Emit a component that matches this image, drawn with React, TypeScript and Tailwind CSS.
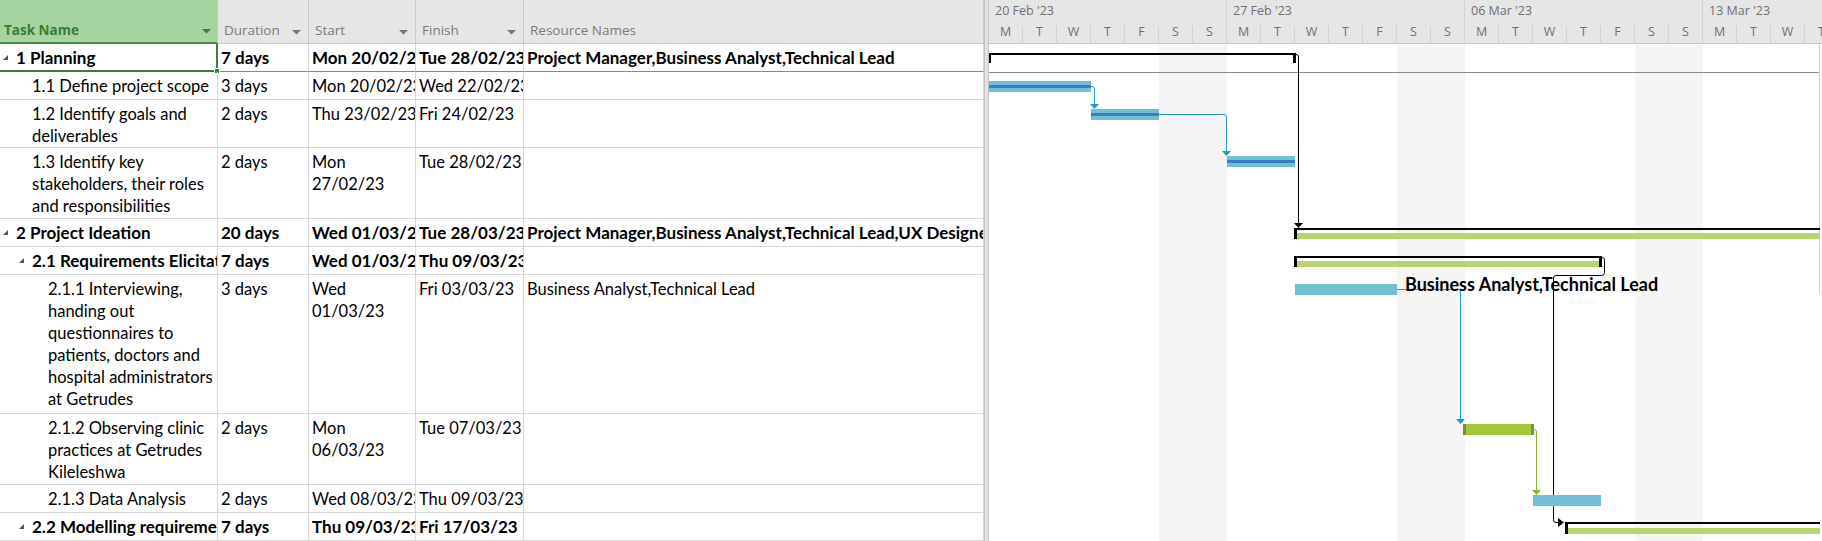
type Row = {
  h: string
  pad: string
  summary?: boolean
  first?: boolean
  name: string[]
  dur: string[]
  start: string[]
  finish: string[]
  res?: string[]
}

const rows: Row[] = [
  {
    h: 'h-[28px]',
    pad: 'pl-[3px]',
    summary: true,
    first: true,
    name: ['1 Planning'],
    dur: ['7 days'],
    start: ['Mon 20/02/23'],
    finish: ['Tue 28/02/23'],
    res: ['Project Manager,Business Analyst,Technical Lead'],
  },
  { h: 'h-[28px]', pad: 'pl-[32px]', name: ['1.1 Define project scope'], dur: ['3 days'], start: ['Mon 20/02/23'], finish: ['Wed 22/02/23'] },
  { h: 'h-[48px]', pad: 'pl-[32px]', name: ['1.2 Identify goals and', 'deliverables'], dur: ['2 days'], start: ['Thu 23/02/23'], finish: ['Fri 24/02/23'] },
  {
    h: 'h-[71px]',
    pad: 'pl-[32px]',
    name: ['1.3 Identify key', 'stakeholders, their roles', 'and responsibilities'],
    dur: ['2 days'],
    start: ['Mon', '27/02/23'],
    finish: ['Tue 28/02/23'],
  },
  {
    h: 'h-[29px]',
    pad: 'pl-[3px]',
    summary: true,
    name: ['2 Project Ideation'],
    dur: ['20 days'],
    start: ['Wed 01/03/23'],
    finish: ['Tue 28/03/23'],
    res: ['Project Manager,Business Analyst,Technical Lead,UX Designer'],
  },
  {
    h: 'h-[28px]',
    pad: 'pl-[19px]',
    summary: true,
    name: ['2.1 Requirements Elicitation'],
    dur: ['7 days'],
    start: ['Wed 01/03/23'],
    finish: ['Thu 09/03/23'],
  },
  {
    h: 'h-[139px]',
    pad: 'pl-[48px]',
    name: [
      '2.1.1 Interviewing,',
      'handing out',
      'questionnaires to',
      'patients, doctors and',
      'hospital administrators',
      'at Getrudes',
      'clinic',
    ],
    dur: ['3 days'],
    start: ['Wed', '01/03/23'],
    finish: ['Fri 03/03/23'],
    res: ['Business Analyst,Technical Lead'],
  },
  {
    h: 'h-[71px]',
    pad: 'pl-[48px]',
    name: ['2.1.2 Observing clinic', 'practices at Getrudes', 'Kileleshwa'],
    dur: ['2 days'],
    start: ['Mon', '06/03/23'],
    finish: ['Tue 07/03/23'],
  },
  { h: 'h-[28px]', pad: 'pl-[48px]', name: ['2.1.3 Data Analysis'], dur: ['2 days'], start: ['Wed 08/03/23'], finish: ['Thu 09/03/23'] },
  {
    h: 'h-[28px]',
    pad: 'pl-[19px]',
    summary: true,
    name: ['2.2 Modelling requirements'],
    dur: ['7 days'],
    start: ['Thu 09/03/23'],
    finish: ['Fri 17/03/23'],
  },
]

const weeks = ["20 Feb '23", "27 Feb '23", "06 Mar '23", "13 Mar '23"]
const days = ['M', 'T', 'W', 'T', 'F', 'S', 'S']

function DropArrow({ green }: { green?: boolean }) {
  return (
    <svg width="9" height="5" viewBox="0 0 9 5" className="shrink-0">
      <polygon points="0,0 9,0 4.5,4.5" fill={green ? '#3f7d3a' : '#777777'} />
    </svg>
  )
}

function Lines({ lines }: { lines?: string[] }) {
  return (
    <>
      {(lines ?? []).map((l, i) => (
        <div key={i} className="whitespace-nowrap overflow-hidden">
          {l}
        </div>
      ))}
    </>
  )
}

function TableRow({ r }: { r: Row }) {
  const line = r.first ? 'border-b-[#8a8a8a]' : 'border-b-[#d6d6d6]'
  const weight = r.summary ? 'font-bold text-[17px]' : ''
  const cell = `border-b border-r border-r-[#d6d6d6] ${line} overflow-hidden pt-[3px] pl-[3px] ${weight}`
  return (
    <div className={`flex ${r.h}`}>
      <div
        className={`relative w-[218px] shrink-0 flex pt-[3px] ${r.pad} ${weight} ${
          r.first
            ? 'border-b-2 border-r-2 border-[#3d7e3a]'
            : 'border-b border-r border-[#d6d6d6] overflow-hidden'
        }`}
      >
        {r.summary && (
          <div className="w-[13px] shrink-0 pt-[8px]">
            <svg width="5" height="5" viewBox="0 0 5 5">
              <polygon points="5,0 5,5 0,5" fill="#555555" />
            </svg>
          </div>
        )}
        <div className="min-w-0 flex-1 overflow-hidden">
          <Lines lines={r.name} />
        </div>
        {r.first && (
          <div className="absolute -right-[4px] -bottom-[4px] w-[6px] h-[6px] bg-[#3d7e3a] border border-white" />
        )}
      </div>
      <div className={`w-[91px] shrink-0 ${cell}`}>
        <Lines lines={r.dur} />
      </div>
      <div className={`w-[107px] shrink-0 ${cell}`}>
        <Lines lines={r.start} />
      </div>
      <div className={`w-[108px] shrink-0 ${cell}`}>
        <Lines lines={r.finish} />
      </div>
      <div className={`w-[460px] shrink-0 ${cell}`}>
        <Lines lines={r.res} />
      </div>
    </div>
  )
}

function GanttChart() {
  const blue = '#72bfd1'
  const prog = '#3b7dcd'
  const link = '#1f9dc3'
  const sumFill = '#b8d46a'
  return (
    <svg width="833" height="497" viewBox="0 0 833 497" className="block" shapeRendering="crispEdges">
      {/* weekend shading */}
      <rect x="170" y="0" width="68" height="497" fill="#f5f5f5" />
      <rect x="408" y="0" width="68" height="497" fill="#f5f5f5" />
      <rect x="646" y="0" width="68" height="497" fill="#f5f5f5" />
      <line x1="0" y1="28.5" x2="830" y2="28.5" stroke="#8a8a8a" strokeWidth="1" />
      <line x1="830.5" y1="0" x2="830.5" y2="250" stroke="#d0d0d0" strokeWidth="1" />

      {/* 1 Planning summary */}
      <rect x="0" y="9" width="307" height="2" fill="#000" />
      <rect x="0" y="9" width="2" height="10" fill="#000" />
      <rect x="304" y="9" width="3" height="10" fill="#000" />
      <path d="M307,10.5 Q309.5,10.5 309.5,13 V179" fill="none" stroke="#000" strokeWidth="1" shapeRendering="auto" />
      <polygon points="305,179 314,179 309.5,184" fill="#000" shapeRendering="auto" />

      {/* 1.1 */}
      <rect x="0" y="37" width="102" height="11" fill={blue} />
      <rect x="0" y="41" width="102" height="3" fill={prog} />
      <path d="M102,42.5 H103 Q105.5,42.5 105.5,45 V60" fill="none" stroke={link} strokeWidth="1" shapeRendering="auto" />
      <polygon points="101,60 110,60 105.5,65" fill={link} shapeRendering="auto" />

      {/* 1.2 */}
      <rect x="102" y="65" width="68" height="11" fill={blue} />
      <rect x="102" y="69" width="68" height="3" fill={prog} />
      <path d="M170,70.5 H235 Q237.5,70.5 237.5,73 V107" fill="none" stroke={link} strokeWidth="1" shapeRendering="auto" />
      <polygon points="233,107 242,107 237.5,112" fill={link} shapeRendering="auto" />

      {/* 1.3 */}
      <rect x="238" y="112" width="68" height="11" fill={blue} />
      <rect x="238" y="116" width="68" height="3" fill={prog} />

      {/* 2 Project Ideation */}
      <rect x="305" y="184" width="526" height="2" fill="#000" />
      <rect x="305" y="184" width="3" height="11" fill="#000" />
      <rect x="308" y="189" width="523" height="6" fill={sumFill} />

      {/* 2.1 */}
      <rect x="305" y="212" width="308" height="2" fill="#000" />
      <rect x="305" y="212" width="3" height="11" fill="#000" />
      <rect x="308" y="217" width="302" height="6" fill={sumFill} />
      <rect x="610" y="212" width="3" height="11" fill="#000" />
      <path
        d="M613,213.5 Q615.5,213.5 615.5,216 V228.5 Q615.5,231.5 612.5,231.5 H567 Q564.5,231.5 564.5,234 V475.5 Q564.5,478.5 567,478.5 H570"
        fill="none"
        stroke="#000"
        strokeWidth="1"
        shapeRendering="auto"
      />
      <polygon points="569,474 569,483 575,478.5" fill="#000" shapeRendering="auto" />

      {/* 2.1.1 */}
      <rect x="306" y="240" width="102" height="11" fill={blue} />
      <path d="M408,245.5 H469 Q471.5,245.5 471.5,248 V375" fill="none" stroke={link} strokeWidth="1" shapeRendering="auto" />
      <polygon points="467,375 476,375 471.5,380" fill={link} shapeRendering="auto" />

      {/* 2.1.2 */}
      <rect x="474" y="380" width="71" height="11" fill="#a4c639" />
      <rect x="474" y="380" width="3" height="11" fill="#76913a" />
      <rect x="542" y="380" width="3" height="11" fill="#76913a" />
      <path d="M545,385.5 Q547.5,385.5 547.5,388 V446" fill="none" stroke="#8cb522" strokeWidth="1" shapeRendering="auto" />
      <polygon points="543,446 552,446 547.5,451" fill="#8cb522" shapeRendering="auto" />

      {/* 2.1.3 */}
      <rect x="544" y="451" width="68" height="11" fill={blue} />

      {/* 2.2 */}
      <rect x="576" y="478" width="255" height="2" fill="#000" />
      <rect x="576" y="478" width="3" height="12" fill="#000" />
      <rect x="579" y="484" width="252" height="6" fill={sumFill} />
    </svg>
  )
}

export default function App() {
  return (
    <div className="w-[1822px] h-[541px] overflow-hidden bg-white flex font-[Lato,sans-serif] text-[16.5px] leading-[22px] text-black">
      {/* table */}
      <div className="w-[984px] shrink-0 flex flex-col">
        <div className="flex h-[44px] shrink-0 bg-[#e6e6e6] font-['Open_Sans',sans-serif] text-[13.5px] leading-[20px] text-[#7a7a7a]">
          <div className="w-[218px] shrink-0 bg-[#a6d4a0] border-b-2 border-r border-b-[#4b8b47] border-r-[#c9c9c9] flex items-end justify-between pl-[4px] pr-[6px] pb-[2px]">
            <span className="font-bold text-[#3b7a34]">Task Name</span>
            <span className="pb-[6px]">
              <DropArrow green />
            </span>
          </div>
          {[
            ['Duration', 'w-[91px]', true],
            ['Start', 'w-[107px]', true],
            ['Finish', 'w-[108px]', true],
            ['Resource Names', 'w-[460px]', false],
          ].map(([label, w, arrow]) => (
            <div
              key={label as string}
              className={`${w} shrink-0 border-b border-r border-[#c9c9c9] flex items-end justify-between pl-[6px] pr-[7px] pb-[3px]`}
            >
              <span>{label}</span>
              {arrow && (
                <span className="pb-[5px]">
                  <DropArrow />
                </span>
              )}
            </div>
          ))}
        </div>
        {rows.map((r, i) => (
          <TableRow key={i} r={r} />
        ))}
      </div>

      {/* splitter */}
      <div className="w-[5px] shrink-0 bg-[#e2e2e2] border-x border-[#c3c3c3]" />

      {/* gantt */}
      <div className="flex-1 min-w-0 flex flex-col overflow-hidden">
        <div className="h-[44px] shrink-0 flex bg-[#e6e6e6] border-b border-[#c6c6c6] font-['Open_Sans',sans-serif] text-[12.5px] text-[#6f6f6f]">
          {weeks.map((w) => (
            <div key={w} className="w-[238px] shrink-0 border-r border-[#d2d2d2] flex flex-col">
              <div className="h-[22px] pl-[6px] leading-[22px]">{w}</div>
              <div className="flex">
                {days.map((d, i) => (
                  <div
                    key={i}
                    className={`mt-[4px] h-[17px] flex-1 flex justify-center leading-[12px] ${
                      i < 6 ? 'border-r border-[#d2d2d2]' : ''
                    }`}
                  >
                    {d}
                  </div>
                ))}
              </div>
            </div>
          ))}
        </div>
        <div className="relative">
          <GanttChart />
          <div className="absolute left-[416px] top-[230px] font-bold text-[18px] leading-[20px] whitespace-nowrap">
            Business Analyst,Technical Lead
          </div>
        </div>
      </div>
    </div>
  )
}
